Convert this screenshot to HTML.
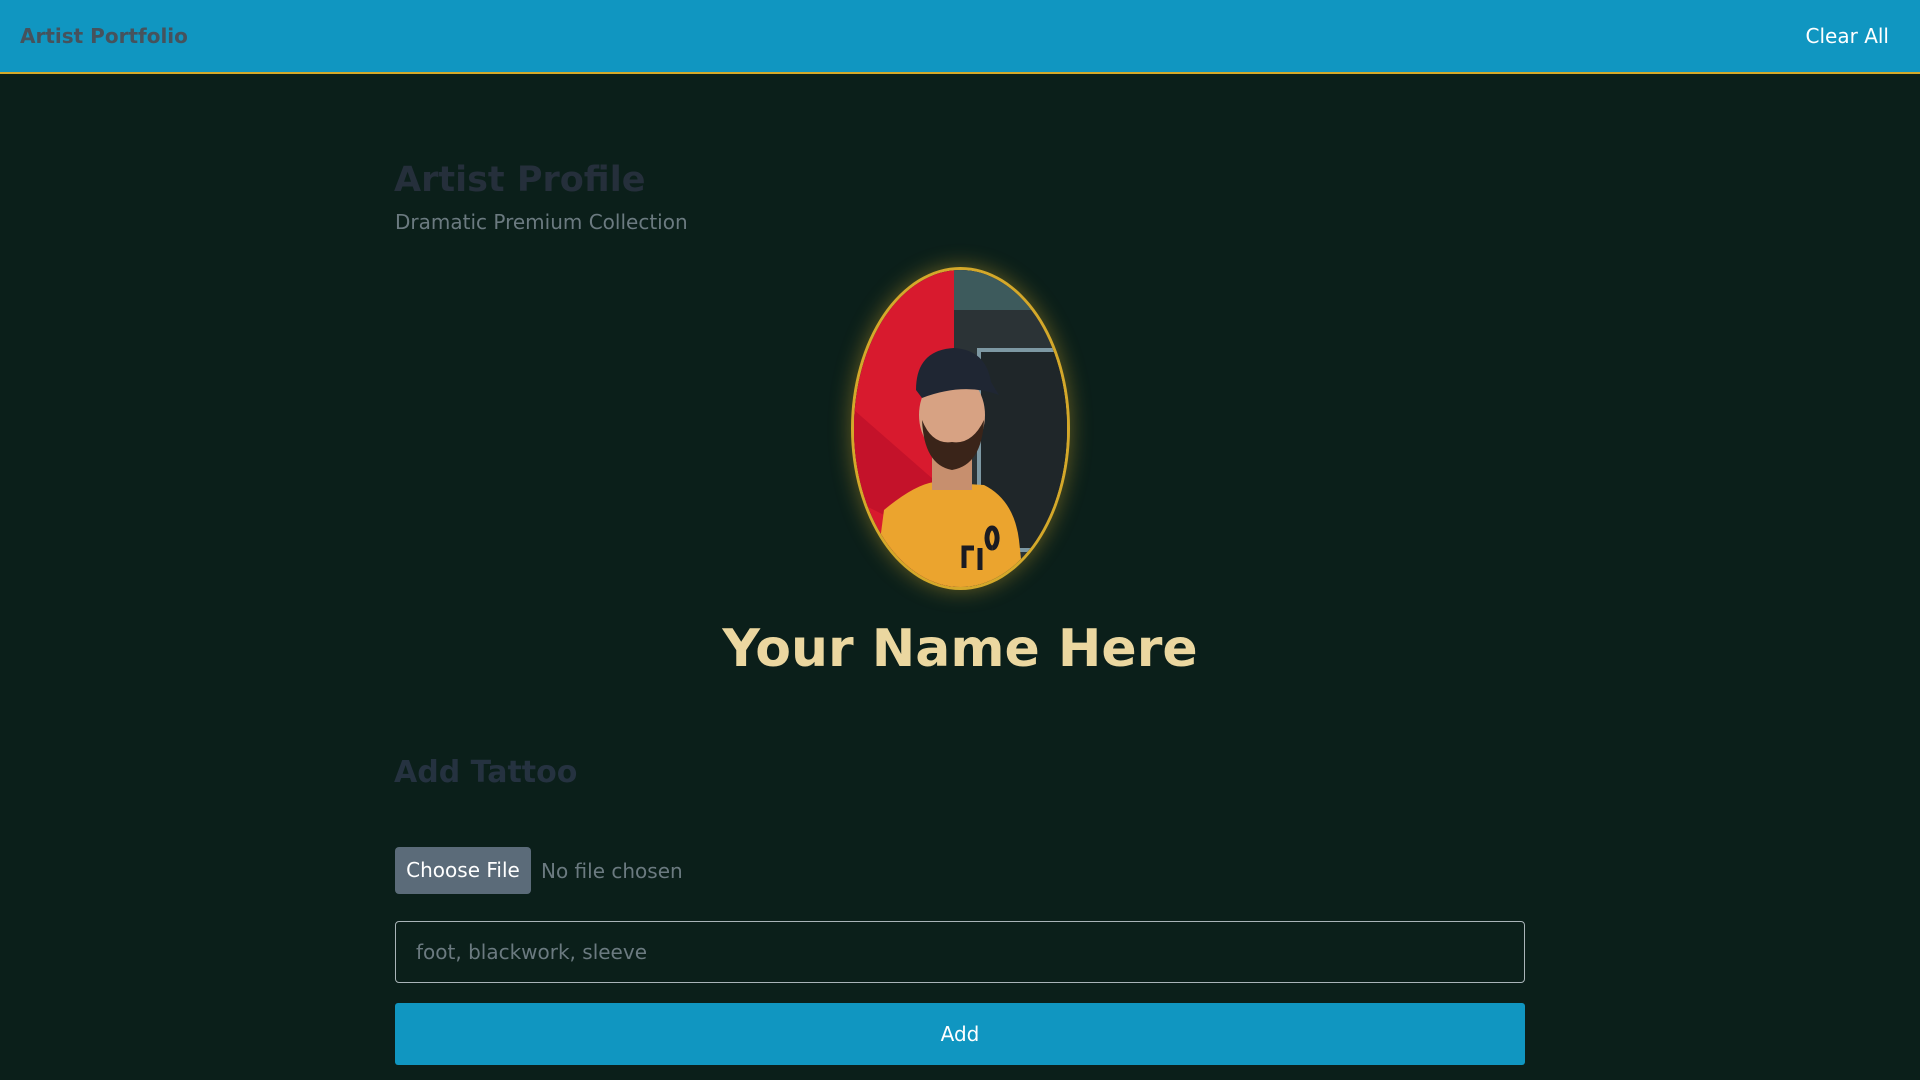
<!DOCTYPE html>
<html><head><meta charset="utf-8"><style>
*{box-sizing:border-box;margin:0;padding:0}
html,body{width:1920px;height:1080px;overflow:hidden}
body{background:#0b1f1a;font-family:"DejaVu Sans","Liberation Sans",sans-serif;position:relative}
.nav{position:absolute;left:0;top:0;width:1920px;height:74px;background:#1096c1;border-bottom:2px solid #d4a82a}
.brand{position:absolute;left:20px;top:24px;font-size:20px;font-weight:bold;color:#46525c}
.clear{position:absolute;right:31px;top:24px;font-size:20px;color:#fff}
.t{position:absolute;white-space:nowrap}
</style></head><body>
<div class="nav"><div class="brand">Artist Portfolio</div><div class="clear">Clear All</div></div>
<div class="t" style="left:394px;top:160px;font-size:35px;font-weight:bold;color:#252f3b">Artist Profile</div>
<div class="t" style="left:395px;top:210px;font-size:20px;color:#6b7a80">Dramatic Premium Collection</div>
<div style="position:absolute;left:851px;top:267px;width:219px;height:323px;border-radius:50%;border:3px solid #d4a82a;box-shadow:0 0 22px rgba(212,168,42,.45);overflow:hidden;background:#2a3236">
<svg width="213" height="317" viewBox="0 0 213 317" style="display:block">
<rect width="213" height="317" fill="#2b3336"/>
<rect x="0" y="0" width="100" height="317" fill="#d81a2e"/>
<rect x="100" y="0" width="113" height="40" fill="#3d5a5c"/>
<rect x="125" y="80" width="90" height="200" fill="#1f2629" stroke="#7d98a3" stroke-width="4"/>
<path d="M0 140 L80 210 L80 270 L0 230Z" fill="#c4122a"/>
<path d="M20 317 L30 240 Q60 215 80 212 L130 215 Q160 230 165 270 L170 317Z" fill="#eba42e"/>
<path d="M110 298 v-20 h10 M126 300 v-22 M138 278 a5 10 0 1 1 0.1 0" stroke="#1b1b22" stroke-width="5" fill="none"/>
<rect x="78" y="160" width="40" height="60" fill="#c78f6e"/>
<ellipse cx="98" cy="145" rx="33" ry="42" fill="#d7a283"/>
<path d="M68 150 Q70 195 98 200 Q128 195 130 150 Q118 175 98 172 Q78 175 68 150Z" fill="#3a2419"/>
<path d="M62 120 Q62 80 100 78 Q132 80 137 112 L145 125 Q110 112 68 128Z" fill="#1f2633"/>
</svg></div>
<div class="t" style="left:0;width:1920px;text-align:center;top:619px;font-size:52px;font-weight:bold;color:#ebd7a0">Your Name Here</div>
<div class="t" style="left:394px;top:755px;font-size:30px;font-weight:bold;color:#253240">Add Tattoo</div>
<div style="position:absolute;left:395px;top:847px;width:136px;height:47px;background:#5b6b79;border-radius:4px;color:#fff;font-size:20px;line-height:46px;text-align:center">Choose File</div>
<div class="t" style="left:541px;top:859px;font-size:20px;color:#6b7a80">No file chosen</div>
<div style="position:absolute;left:395px;top:921px;width:1130px;height:62px;border:1px solid #a9b4b8;border-radius:4px"></div>
<div class="t" style="left:416px;top:940px;font-size:20px;color:#6b7a80">foot, blackwork, sleeve</div>
<div style="position:absolute;left:395px;top:1003px;width:1130px;height:62px;background:#1096c1;border-radius:3px;color:#fff;font-size:20px;line-height:62px;text-align:center">Add</div>
</body></html>
